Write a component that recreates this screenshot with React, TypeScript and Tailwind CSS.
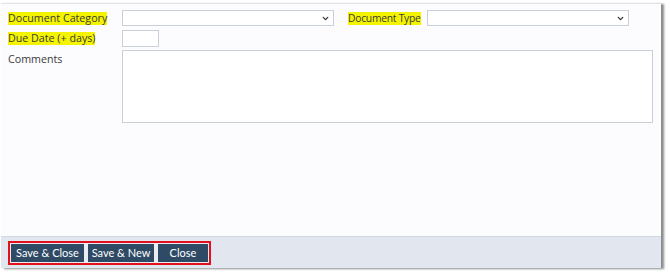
import { ChevronDown } from "lucide-react";

function Select({ className }: { className: string }) {
  return (
    <div className={`flex h-[16px] shrink-0 items-center justify-end border border-[#c9d0da] bg-white pr-[3px] ${className}`}>
      <ChevronDown className="h-[9px] w-[9px] text-[#333]" strokeWidth={3.5} />
    </div>
  );
}

function Label({ children, hl, className = "" }: { children: string; hl?: boolean; className?: string }) {
  return (
    <span className={`whitespace-nowrap leading-[13px] text-[#3a3a3a] ${hl ? "bg-[#f4f400]" : ""} ${className}`}>
      {children}
    </span>
  );
}

export default function App() {
  return (
    <div className="h-[274px] w-[670px] bg-white font-['Open_Sans',sans-serif] text-[10.7px] leading-[13px]">
      <div className="ml-[1px] flex h-[265px] w-[660px] translate-y-[3px] flex-col border-t border-[#dfe2e8] bg-[#fcfcfe] shadow-[3px_1px_2px_rgba(0,0,0,0.45)]">
        {/* Form */}
        <div className="flex flex-1 flex-col pl-[7px] pt-[6px]">
          <div className="flex h-[16px] items-center">
            <div className="flex w-[114px] shrink-0"><Label hl>Document Category</Label></div>
            <Select className="w-[212px]" />
            <div className="ml-[14px] flex w-[79px] shrink-0">
              <Label hl className="text-[10.3px] tracking-[-0.25px]">Document Type</Label>
            </div>
            <Select className="w-[202px]" />
          </div>
          <div className="mt-[4px] flex h-[17px] items-center">
            <div className="flex w-[114px] shrink-0"><Label hl>Due Date (+ days)</Label></div>
            <div className="h-[17px] w-[37px] border border-[#c9d0da] bg-white" />
          </div>
          <div className="mt-[3px] flex items-start">
            <div className="flex w-[114px] shrink-0 pt-[3px]"><Label>Comments</Label></div>
            <div className="h-[73px] w-[531px] border border-[#c9d0da] bg-white" />
          </div>
        </div>
        {/* Footer */}
        <div className="flex h-[32px] items-center border-t border-[#d3d9e2] bg-[#e1e6ef] pl-[7px]">
          <div className="flex h-[24px] items-stretch gap-[4px] border-2 border-[#e3101c] bg-[#e9ecf1] p-[1px] font-['Lato',sans-serif] text-[11px] text-white">
            <button className="w-[73px] bg-[#2f4a65]">Save &amp; Close</button>
            <button className="w-[66px] bg-[#2f4a65]">Save &amp; New</button>
            <button className="w-[50px] bg-[#2f4a65]">Close</button>
          </div>
        </div>
      </div>
    </div>
  );
}
